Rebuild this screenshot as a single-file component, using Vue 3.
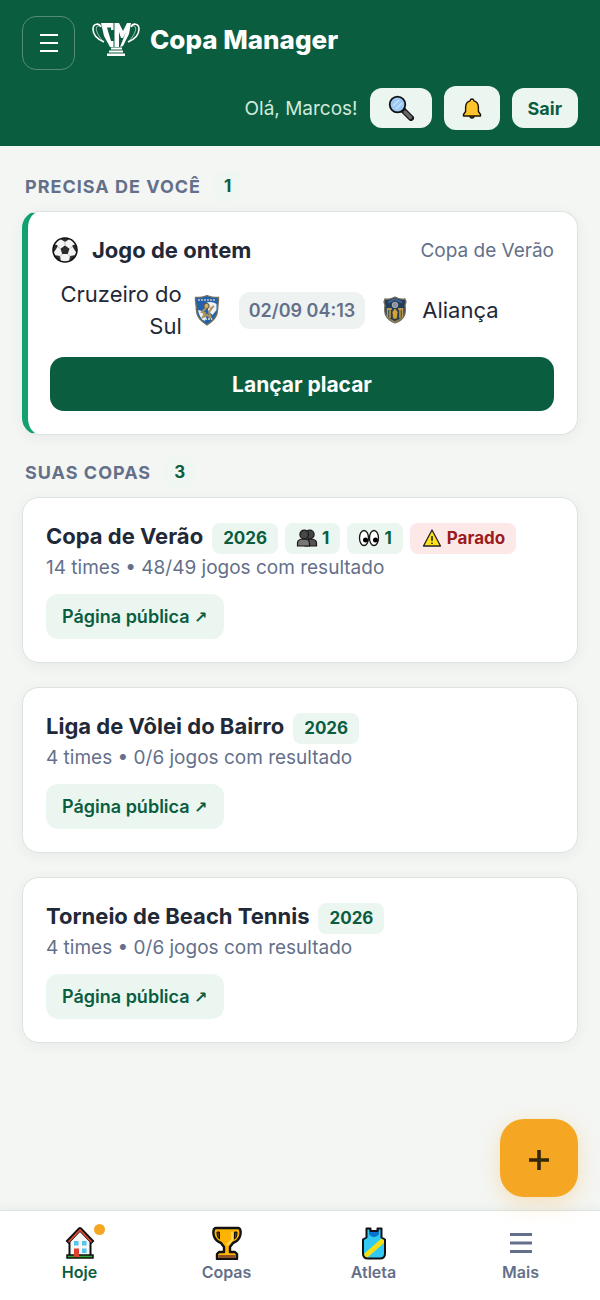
<script setup>
const cups = [
  { name: 'Copa de Verão', year: '2026', meta: '14 times • 48/49 jogos com resultado', admins: 1, watchers: 1, stalled: true },
  { name: 'Liga de Vôlei do Bairro', year: '2026', meta: '4 times • 0/6 jogos com resultado' },
  { name: 'Torneio de Beach Tennis', year: '2026', meta: '4 times • 0/6 jogos com resultado' },
]
</script>

<template>
  <div class="page">
    <header class="top">
      <div class="brand-row">
        <button class="menu" type="button" aria-label="Menu">
          <svg width="20" height="20" viewBox="0 0 20 20"><path d="M1 2h18M1 10h18M1 18h18" stroke="#fff" stroke-width="2.200" /></svg>
        </button>
        <a class="brand" href="#">
          <svg width="48" height="38" viewBox="0 0 48 38" fill="#fff" aria-hidden="true">
            <path d="M9 7C7 2.500 1 3.500 1 9c0 5 4 10 11 13M39 7c2-4.500 8-3.500 8 2 0 5-4 10-11 13" fill="none" stroke="#fff" stroke-width="1.600" />
            <path d="M9 7C6 4 3.500 7 4.500 10.500 5.500 14 8 18 11.500 21.500M39 7c3-3 5.500 0 4.500 3.500C42.500 14 40 18 36.500 21.500" fill="none" stroke="#fff" stroke-width=".6" />
            <path d="M9 3h12.500v7H19V7.500h-4L19 21h2.500v6H18l-6-11z" />
            <path d="M22.500 3H27l4 8 4-8h4l-2 11-6 12-3 1 6-15-3 6h-2l-2-6v15h-4.500z" />
            <path d="M19 27.500h11v2H19zM17 30.500h14v2H17zM15 33.500h18V36H15z" />
          </svg>
          <span>Copa Manager</span>
        </a>
      </div>
      <div class="user-row">
        <span class="hello">Olá, Marcos!</span>
        <button class="light search" type="button" aria-label="Buscar">
          <svg width="26" height="26" viewBox="0 0 26 26">
            <path d="M14 14l9 9" stroke="#111" stroke-width="6" stroke-linecap="round" />
            <path d="M17 17l5.500 5.500" stroke="#686868" stroke-width="3.500" stroke-linecap="round" />
            <circle cx="9.500" cy="9.500" r="7.800" fill="#9cc8f5" stroke="#111" stroke-width="1.800" />
            <path d="M5 11l6-6M8 14l6-6" stroke="#c4e0fb" stroke-width="1.500" />
          </svg>
        </button>
        <button class="light bell" type="button" aria-label="Notificações">
          <svg width="20" height="22" viewBox="0 0 20 22" stroke="#1b1505" stroke-width="1.400" stroke-linejoin="round">
            <circle cx="10" cy="19" r="2" fill="#d68b0c" />
            <path d="M10 2c-1.200 0-1.800.8-2 1.800C4.800 4.800 3.600 7 3.600 10.500v4L1.500 17.500V19h17v-1.500l-2.100-3v-4c0-3.500-1.200-5.700-4.400-6.700-.2-1-.8-1.800-2-1.800z" fill="#ffc32b" />
          </svg>
        </button>
        <button class="light" type="button">Sair</button>
      </div>
    </header>

    <main class="content">
      <section>
        <h2 class="heading">PRECISA DE VOCÊ <span class="chip">1</span></h2>
        <article class="card task">
          <div class="task-head">
            <svg width="28" height="28" viewBox="0 0 28 28" aria-hidden="true">
              <defs><clipPath id="ball"><circle cx="14" cy="14" r="12" /></clipPath></defs>
              <circle cx="14" cy="14" r="12" fill="#f4f4f4" />
              <g clip-path="url(#ball)" fill="#2c2c2c">
                <path d="M14 9.500l4.500 3.300-1.700 5.200h-5.600l-1.700-5.200zM8 2h12l-6 4zM1 8l5 1 1 1-3.500 5.500L0 16zM27 8l-5 1-1 1 3.500 5.500L28 16zM3 19l6 1 1 6H5zM25 19l-6 1-1 6h5z" />
                <path d="M14 9.500V5M18.500 12.800L22 10M16.800 18l3 3.500M11.200 18l-3 3.500M9.500 12.800L6 10" stroke="#aaa" stroke-width=".7" />
              </g>
              <circle cx="14" cy="14" r="12" fill="none" stroke="#111" stroke-width="1.600" />
            </svg>
            <h3>Jogo de ontem</h3>
            <span class="cup-name">Copa de Verão</span>
          </div>
          <div class="match">
            <div class="team home">
              <span>Cruzeiro do Sul</span>
              <svg class="crest" width="32" height="32" viewBox="0 0 32 32" aria-hidden="true">
                <path d="M4.500 3.500C9 3.500 13 3 16 1.500c3 1.500 7 2 11.500 2 .5 4-1 8-.8 12C26.500 23 22 27 16 31 10 27 5.500 23 5.300 15.500 5.500 11 4 8 4.500 3.500z" fill="#2461aa" stroke="#75705c" stroke-width="1.300" />
                <path d="M15 9c3-2 8-1 10.500 1v6l-4 5-4-4zM7 16l4 1 4 6-1 4c-4-2-6-6-7-11z" fill="#edf3f6" />
                <path d="M7 6h18" stroke="#9fb0bd" stroke-width="2" stroke-dasharray="2 1" />
                <circle cx="15.500" cy="12" r="2.700" fill="#c9af70" stroke="#574a32" />
                <path d="M15 14l-4 4 3 1-2 4 4-2 4 3-2-6 3-4M19 15l4-3" fill="none" stroke="#ae9359" stroke-width="2" />
                <path d="M11 25h10" stroke="#dce5ea" stroke-width="1.500" stroke-dasharray="2 1" />
              </svg>
            </div>
            <time class="when">02/09 04:13</time>
            <div class="team">
              <svg class="crest" width="32" height="32" viewBox="0 0 32 32" aria-hidden="true">
                <path d="M4 5c4 1 7-.5 10-2 3 1.500 6 3 10 2l1 3-1 3c1 9 0 14-10 18C4 25 3 19 4 11L3 8z" fill="#243c5b" stroke="#706b58" stroke-width="1.300" />
                <path d="M7 8.500l7-3.500 7 3.500" fill="none" stroke="#3f638c" stroke-width="2" />
                <circle cx="14" cy="11" r="2.800" fill="#8593a0" stroke="#c5c9c6" stroke-width=".7" />
                <path d="M6.500 14v9M9 14v10M19 14v10M21.500 14v9M6 15h5M17 15h5" stroke="#c5a14b" stroke-width="1.500" />
                <path d="M14 14l-3 4 1 7h4l1-7z" fill="#d4a438" stroke="#3d392c" stroke-width=".7" />
                <path d="M6 23c2 2 4 3 8 5 4-2 6-3 8-5" fill="none" stroke="#8d8055" stroke-width="1.500" />
              </svg>
              <span>Aliança</span>
            </div>
          </div>
          <button class="primary" type="button">Lançar placar</button>
        </article>
      </section>

      <section>
        <h2 class="heading">SUAS COPAS <span class="chip">3</span></h2>
        <div class="list">
          <article v-for="cup in cups" :key="cup.name" class="card cup">
            <div class="cup-title">
              <h3>{{ cup.name }}</h3>
              <span class="chip">{{ cup.year }}</span>
              <span v-if="cup.admins" class="chip">
                <svg width="22" height="18" viewBox="0 0 22 18" aria-hidden="true">
                  <g stroke="#171717" stroke-width="1.200">
                    <path d="M9 17v-3c0-3 2-4 5-4 4 0 6.500 1 6.500 4v3z" fill="#555" /><circle cx="13.800" cy="5.500" r="4.300" fill="#444" />
                    <path d="M1.500 17v-3c0-3 2-4 6-4s6 1 6 4v3z" fill="#777" /><circle cx="8.200" cy="5.500" r="4.300" fill="#484848" />
                  </g>
                </svg>
                {{ cup.admins }}
              </span>
              <span v-if="cup.watchers" class="chip">
                <svg width="22" height="18" viewBox="0 0 22 18" aria-hidden="true">
                  <g fill="#fff" stroke="#171717" stroke-width="1.300"><ellipse cx="6" cy="9" rx="4.500" ry="7.500" /><ellipse cx="16" cy="9" rx="4.500" ry="7.500" /></g>
                  <circle cx="7.500" cy="11" r="2.500" /><circle cx="17.500" cy="11" r="2.500" />
                </svg>
                {{ cup.watchers }}
              </span>
              <span v-if="cup.stalled" class="chip danger">
                <svg width="22" height="18" viewBox="0 0 22 18" aria-hidden="true">
                  <path d="M11 1l8.500 16h-17z" fill="#ffe01b" stroke="#222" stroke-width="1.300" stroke-linejoin="round" />
                  <path d="M11 7v5M11 13.500V15" stroke="#222" stroke-width="1.500" />
                </svg>
                Parado
              </span>
            </div>
            <p>{{ cup.meta }}</p>
            <a class="public" href="#">Página pública <span class="arrow">↗</span></a>
          </article>
        </div>
      </section>
    </main>

    <button class="fab" type="button" aria-label="Nova copa">
      <svg width="20" height="20" viewBox="0 0 20 20"><path d="M0 10h20M10 0v20" stroke="#35270a" stroke-width="3.600" /></svg>
    </button>

    <nav class="tabs">
      <a class="tab active" href="#">
        <span class="tab-icon">
          <svg width="32" height="34" viewBox="0 0 32 34" aria-hidden="true">
            <path d="M5.500 15L16 4l10.500 11v16h-21z" fill="#f5f6f6" stroke="#111" stroke-width="2" />
            <path d="M3 29h26v3H3z" fill="#2ea831" stroke="#111" stroke-width="1.500" />
            <path d="M3 16.500L16 3l13 13.500" fill="none" stroke="#111" stroke-width="4" stroke-linejoin="round" />
            <path d="M4.500 16L16 4l11.500 12" fill="none" stroke="#e34b38" stroke-width="1.800" />
            <path d="M10 22.500h5v8.500h-5z" fill="#db4031" />
            <path d="M10 15h4.500v4.500H10zM18 15h4.500v4.500H18zM18 22.500h4.500V27H18z" fill="#55c4ec" />
          </svg>
          <i class="dot"></i>
        </span>
        Hoje
      </a>
      <a class="tab" href="#">
        <span class="tab-icon">
          <svg width="32" height="34" viewBox="0 0 32 34" aria-hidden="true">
            <path d="M3 3q1-1 2-1h22q1 0 2 1c2 6-1 12-7 14l-3 4v5h5l2 2v5H6v-5l2-2h5v-5l-3-4C4 15 1 9 3 3z" fill="#fdb300" stroke="#111" stroke-width="2.400" stroke-linejoin="round" />
            <path d="M6 6h2.500v7C6.500 12 6 9 6 6zM26 6h-2.500v7c2-1 2.500-4 2.500-7z" fill="#5b3c00" stroke="#111" />
            <path d="M21 6v8l-5 5" fill="none" stroke="#ffd35c" stroke-width="2" />
            <path d="M7.500 29h17v3h-17z" fill="#8c5125" />
          </svg>
        </span>
        Copas
      </a>
      <a class="tab" href="#">
        <span class="tab-icon">
          <svg width="32" height="34" viewBox="0 0 32 34" aria-hidden="true">
            <defs><clipPath id="vest"><path d="M8 3h5v3h6V3h5v8l4 3v13c0 3-2 5-5 5H9c-3 0-5-2-5-5V14l4-3z" /></clipPath></defs>
            <g clip-path="url(#vest)"><path d="M0 0h32v34H0z" fill="#32c9f5" /><path d="M4 33L29 11" stroke="#f5df15" stroke-width="5" /><path d="M11 3h10v5c-2 4-8 4-10 0z" fill="#0873cf" /></g>
            <path d="M8.500 2.500h4v2.500h7V2.500h4v9l3.500 2v14c0 3-2 5-5 5H10c-3 0-5-2-5-5v-14l3.500-2z" fill="none" stroke="#111" stroke-width="2" stroke-linejoin="round" />
          </svg>
        </span>
        Atleta
      </a>
      <a class="tab" href="#">
        <span class="tab-icon">
          <svg width="22" height="22" viewBox="0 0 22 22" aria-hidden="true"><path d="M0 2.500h22M0 11h22M0 19.500h22" stroke="#64708a" stroke-width="3" /></svg>
        </span>
        Mais
      </a>
    </nav>
  </div>
</template>

<style>
body { margin: 0; background: #f4f6f4; }
</style>

<style scoped>
* { box-sizing: border-box; }
.page { min-height: 100vh; display: flex; flex-direction: column; font-family: Inter, "Noto Sans", sans-serif; color: #1f2937; background: #f4f6f4; }
button { font-family: inherit; border: 0; cursor: pointer; padding: 0; }
a { color: inherit; text-decoration: none; }
h2, h3, p { margin: 0; }
.top { background: #0b5d3f; color: #fff; padding: 16px 22px; display: flex; flex-direction: column; gap: 16px; }
.brand-row { display: flex; align-items: flex-start; gap: 17px; }
.menu { width: 53px; height: 54px; border: 1px solid #548d77; border-radius: 14px; background: transparent; display: grid; place-items: center; }
.brand { display: flex; align-items: center; gap: 10px; height: 46px; font-size: 26px; font-weight: 800; }
.user-row { display: flex; justify-content: flex-end; align-items: center; gap: 12px; height: 44px; }
.hello { font-size: 19px; color: #d0e9dc; }
.light { height: 40px; padding: 0 16px; border-radius: 12px; background: #ecf6f1; color: #0b5d3f; font-size: 18px; font-weight: 700; display: flex; align-items: center; }
.light.search { padding: 0 18px; }
.light.bell { height: 44px; padding: 0 18px; }
.content { flex: 1; padding: 22px 22px 120px; display: flex; flex-direction: column; gap: 19px; }
.heading { display: flex; align-items: center; gap: 12px; height: 36px; margin-bottom: 7px; padding-left: 3px; font-size: 18px; font-weight: 700; letter-spacing: 1px; color: #64708a; }
.chip { display: inline-block; padding: 0 11px; border-radius: 8px; background: #ecf6f1; color: #0b5d3f; font-size: 17px; line-height: 31px; font-weight: 700; letter-spacing: 0; white-space: nowrap; }
.chip svg { vertical-align: -3px; }
.heading .chip { background: #f0f6f2; }
.card { background: #fff; border: 1px solid #dde3e0; border-radius: 17px; padding: 22px 23px 23px; box-shadow: 0 3px 14px rgba(15, 50, 35, 0.06); }
.task { border-left: 6px solid #12a070; padding: 22px 23px 23px 22px; }
.task-head { display: flex; align-items: center; gap: 13px; height: 32px; }
.task-head h3 { flex: 1; font-size: 22px; font-weight: 700; }
.task-head svg { margin-left: 1px; }
.cup-name { font-size: 19px; color: #64708a; }
.match { display: grid; grid-template-columns: 1fr auto 1fr; align-items: center; gap: 16px; margin: 12px 0 15px; font-size: 22px; line-height: 32px; }
.team { display: flex; align-items: center; gap: 9px; }
.home { justify-content: flex-end; text-align: right; }
.crest { flex: none; }
.when { padding: 0 10px; border-radius: 11px; background: #eef2f1; color: #64708a; font-size: 18px; line-height: 37px; font-weight: 600; }
.primary { width: 100%; height: 54px; border-radius: 14px; background: #0b5d3f; color: #fff; font-size: 21px; font-weight: 700; }
.list { display: flex; flex-direction: column; gap: 24px; }
.cup-title { display: flex; flex-wrap: wrap; align-items: baseline; gap: 7px; }
.cup-title h3 { margin-right: 2px; font-size: 22px; line-height: 32px; font-weight: 700; }
.danger { background: #fde8e8; color: #9b1c1c; }
.cup p { font-size: 19px; line-height: 27px; color: #64708a; }
.public { display: inline-block; margin-top: 13px; padding: 0 16px; border-radius: 12px; background: #ecf6f1; color: #0b5d3f; font-size: 18px; line-height: 45px; font-weight: 600; vertical-align: top; }
.arrow { font-family: "DejaVu Sans", sans-serif; font-size: 16px; line-height: 20px; }
.fab { position: fixed; right: 22px; bottom: 103px; z-index: 2; width: 78px; height: 78px; padding-top: 3px; border-radius: 24px; background: #f5a623; display: grid; place-items: center; box-shadow: 0 6px 22px rgba(245, 166, 35, 0.28); }
.tabs { position: sticky; bottom: 0; height: 90px; padding: 15px 6px 0; display: grid; grid-template-columns: repeat(4, 1fr); background: #fff; border-top: 1px solid #dde3e0; box-shadow: 0 -2px 8px rgba(15, 50, 35, 0.05); }
.tab { display: flex; flex-direction: column; align-items: center; color: #64708a; font-size: 16px; line-height: 24px; font-weight: 600; }
.tab.active { color: #0b5d3f; }
.tab-icon { position: relative; height: 34px; display: grid; place-items: center; }
.dot { position: absolute; top: -2px; right: -9px; width: 11px; height: 11px; border-radius: 50%; background: #f5a623; }
</style>
